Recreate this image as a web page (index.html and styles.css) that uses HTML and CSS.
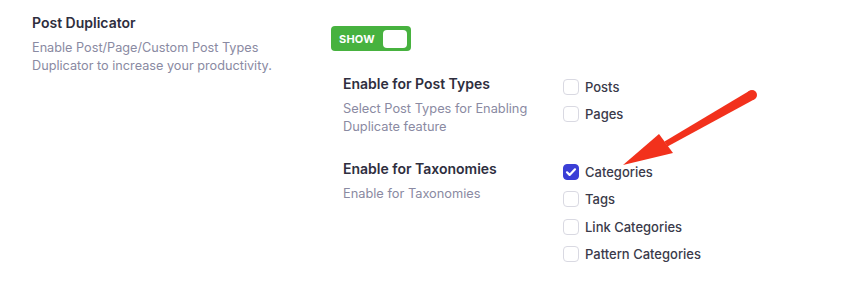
FILE: index.html
```html
<!DOCTYPE html>
<html>
<head>
<meta charset="utf-8">
<link rel="stylesheet" href="styles.css">
</head>
<body>
<div class="setting">
  <div class="intro">
    <h3 class="title">Post Duplicator</h3>
    <p class="desc">Enable Post/Page/Custom Post Types Duplicator to increase your productivity.</p>
  </div>
  <div class="control">
    <div class="toggle"><span class="toggle-text">SHOW</span><span class="knob"></span></div>
    <div class="sub">
      <div class="row">
        <div class="label-col">
          <div class="label">Enable for Post Types</div>
          <div class="sub-desc">Select Post Types for Enabling Duplicate feature</div>
        </div>
        <div class="options">
          <label class="opt"><span class="box"></span>Posts</label>
          <label class="opt"><span class="box"></span>Pages</label>
        </div>
      </div>
      <div class="row">
        <div class="label-col">
          <div class="label">Enable for Taxonomies</div>
          <div class="sub-desc">Enable for Taxonomies</div>
        </div>
        <div class="options">
          <label class="opt"><span class="box checked"><svg viewBox="0 0 16 16" width="16" height="16"><path d="M4 8.3l2.6 2.6L12 5.3" fill="none" stroke="#fff" stroke-width="2.2" stroke-linecap="round" stroke-linejoin="round"/></svg></span>Categories</label>
          <label class="opt"><span class="box"></span>Tags</label>
          <label class="opt"><span class="box"></span>Link Categories</label>
          <label class="opt"><span class="box"></span>Pattern Categories</label>
        </div>
      </div>
    </div>
  </div>
</div>
<svg class="arrow" width="866" height="289" viewBox="0 0 866 289">
  <polygon points="749.5,90.7 754.5,99.3 667.5,146.6 664.5,141.4" fill="#f2311c"/>
  <circle cx="752" cy="95" r="5" fill="#f2311c"/>
  <polygon points="623,165 659,134 673,153" fill="#f2311c"/>
</svg>
</body>
</html>
```
FILE: styles.css
```css
html, body {
  margin: 0;
  background: #ffffff;
}
body {
  font-family: Inter, "Noto Sans", sans-serif;
  position: relative;
  width: 866px;
  height: 289px;
  overflow: hidden;
}
.setting {
  display: flex;
  padding: 13px 0 0 32px;
}
.intro {
  width: 299px;
}
.title {
  margin: 0;
  font-size: 14px;
  line-height: 20px;
  font-weight: 600;
  color: #2e2e3e;
}
.desc {
  margin: 6px 0 0;
  width: 250px;
  font-size: 12.7px;
  line-height: 18px;
  color: #8a8aa2;
}
.control {
  display: flex;
  flex-direction: column;
  padding-top: 13px;
}
.toggle {
  width: 80px;
  height: 25px;
  box-sizing: border-box;
  background: #47b23f;
  border-radius: 4px;
  display: flex;
  align-items: center;
  justify-content: space-between;
  padding: 0 4px 0 8px;
}
.toggle-text {
  color: #fff;
  font-size: 11px;
  font-weight: 700;
  letter-spacing: 0.2px;
}
.knob {
  width: 24px;
  height: 18px;
  background: #fff;
  border-radius: 4px;
}
.sub {
  margin: 23px 0 0 12px;
  display: flex;
  flex-direction: column;
  gap: 23px;
}
.row {
  display: flex;
}
.label-col {
  width: 220px;
}
.label {
  font-size: 14px;
  line-height: 20px;
  font-weight: 600;
  color: #2e2e3e;
}
.sub-desc {
  margin-top: 6px;
  width: 200px;
  font-size: 12.8px;
  line-height: 18px;
  color: #8a8aa2;
}
.options {
  display: flex;
  flex-direction: column;
  margin-top: -1px;
}
.opt {
  height: 27.5px;
  display: flex;
  align-items: center;
  gap: 6px;
  font-size: 13px;
  font-weight: 500;
  color: #3a3a4a;
}
.box {
  width: 16px;
  height: 16px;
  box-sizing: border-box;
  border: 1px solid #d9d9e2;
  border-radius: 4px;
  background: #fff;
  display: flex;
}
.box.checked {
  background: #3b3fd6;
  border-color: #3b3fd6;
}
.box.checked svg {
  margin: -1px;
}
.arrow {
  position: absolute;
  left: 0;
  top: 0;
  pointer-events: none;
}
```
